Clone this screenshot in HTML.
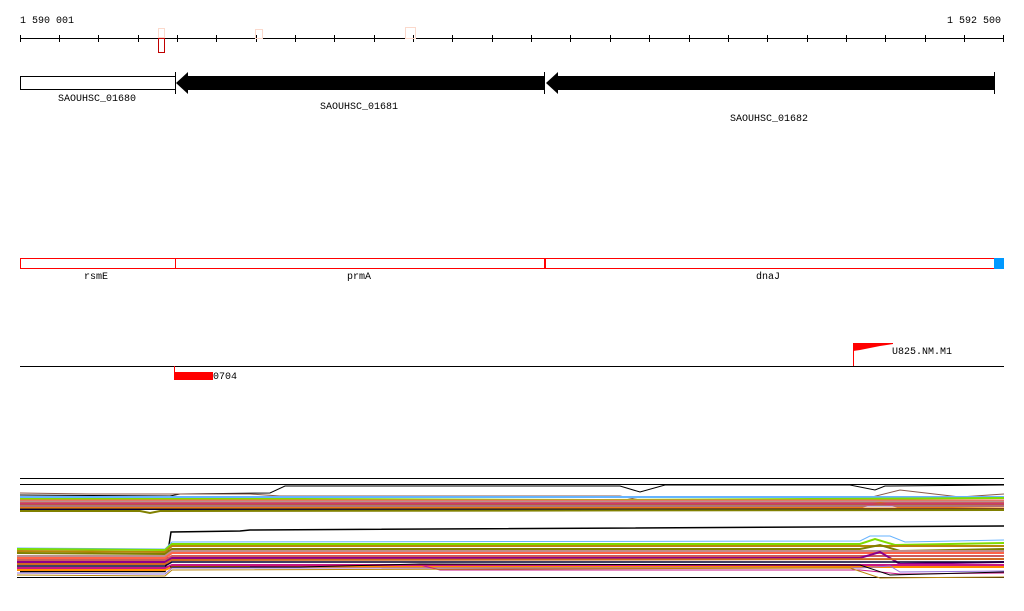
<!DOCTYPE html>
<html><head><meta charset="utf-8"><style>
html,body{margin:0;padding:0;background:#fff;width:1024px;height:611px;overflow:hidden}
svg{display:block}
text{font-family:"Liberation Mono","DejaVu Sans Mono",monospace;font-size:10px;fill:#000}
</style></head><body>
<svg width="1024" height="611" viewBox="0 0 1024 611" xmlns="http://www.w3.org/2000/svg">
<text x="20" y="23">1 590 001</text>
<text x="947" y="23">1 592 500</text>
<line x1="20" y1="38.5" x2="1004" y2="38.5" stroke="#000" stroke-width="1"/>
<g stroke="#000" stroke-width="1">
<line x1="20.5" y1="35" x2="20.5" y2="42"/><line x1="59.5" y1="35" x2="59.5" y2="42"/><line x1="98.5" y1="35" x2="98.5" y2="42"/><line x1="138.5" y1="35" x2="138.5" y2="42"/><line x1="177.5" y1="35" x2="177.5" y2="42"/><line x1="216.5" y1="35" x2="216.5" y2="42"/><line x1="256.5" y1="35" x2="256.5" y2="42"/><line x1="295.5" y1="35" x2="295.5" y2="42"/><line x1="334.5" y1="35" x2="334.5" y2="42"/><line x1="374.5" y1="35" x2="374.5" y2="42"/><line x1="413.5" y1="35" x2="413.5" y2="42"/><line x1="452.5" y1="35" x2="452.5" y2="42"/><line x1="492.5" y1="35" x2="492.5" y2="42"/><line x1="531.5" y1="35" x2="531.5" y2="42"/><line x1="570.5" y1="35" x2="570.5" y2="42"/><line x1="610.5" y1="35" x2="610.5" y2="42"/><line x1="649.5" y1="35" x2="649.5" y2="42"/><line x1="689.5" y1="35" x2="689.5" y2="42"/><line x1="728.5" y1="35" x2="728.5" y2="42"/><line x1="767.5" y1="35" x2="767.5" y2="42"/><line x1="807.5" y1="35" x2="807.5" y2="42"/><line x1="846.5" y1="35" x2="846.5" y2="42"/><line x1="885.5" y1="35" x2="885.5" y2="42"/><line x1="925.5" y1="35" x2="925.5" y2="42"/><line x1="964.5" y1="35" x2="964.5" y2="42"/><line x1="1003.5" y1="35" x2="1003.5" y2="42"/>
</g>
<rect x="158.5" y="28.5" width="6" height="9" fill="#fff" stroke="#fbd9cc"/>
<rect x="158.5" y="38.5" width="6" height="14" fill="#fff" stroke="#c00000"/>
<rect x="255.5" y="29.5" width="7" height="9" fill="none" stroke="#fbd9cc"/>
<rect x="405.5" y="27.5" width="10" height="11" fill="none" stroke="#fbd9cc"/>

<rect x="20.5" y="76.5" width="155" height="13" fill="#fff" stroke="#000"/>
<line x1="175.5" y1="72" x2="175.5" y2="94" stroke="#000"/>
<polygon points="176,83 188,72 188,76 544,76 544,90 188,90 188,94" fill="#000"/>
<line x1="544.5" y1="72" x2="544.5" y2="94" stroke="#000"/>
<polygon points="546,83 558,72 558,76 994,76 994,90 558,90 558,94" fill="#000"/>
<line x1="994.5" y1="72" x2="994.5" y2="94" stroke="#000"/>
<text x="58" y="101">SAOUHSC_01680</text>
<text x="320" y="109">SAOUHSC_01681</text>
<text x="730" y="121">SAOUHSC_01682</text>

<g fill="none" stroke="#f00" stroke-width="1">
<rect x="20.5" y="258.5" width="155" height="10"/>
<rect x="175.5" y="258.5" width="369" height="10"/>
<rect x="545.5" y="258.5" width="449" height="10"/>
</g>
<rect x="994" y="258" width="10" height="11" fill="#0099ff"/>
<text x="84" y="279">rsmE</text>
<text x="347" y="279">prmA</text>
<text x="756" y="279">dnaJ</text>

<line x1="20" y1="366.5" x2="1004" y2="366.5" stroke="#000"/>
<line x1="174.5" y1="366" x2="174.5" y2="373" stroke="#f00"/>
<rect x="174" y="372" width="39" height="8" fill="#f00"/>
<text x="213" y="379">0704</text>
<line x1="853.5" y1="343" x2="853.5" y2="366" stroke="#f00"/>
<polygon points="853,343 893,343 893,344 880,346 870,348 860,350 853,351" fill="#f00"/>
<text x="892" y="354">U825.NM.M1</text>

<g fill="none" stroke-width="1">
<line x1="20" y1="478.5" x2="1004" y2="478.5" stroke="#000"/>
<line x1="20" y1="484.5" x2="1004" y2="484.5" stroke="#000"/>
<polyline points="20,495 170,496 180,494 270,493 285,486 620,486 640,492 665,485 850,485 875,490 885,486 1004,485" stroke="#000"/>
<polyline points="20,493 90,494 250,494 280,496 620,496 640,500 860,500 900,490 960,497 1004,494" stroke="#8b5a4a"/>
</g>
<g fill="none" stroke-width="2">
<polyline points="20,497 1004,497" stroke="#66b3ff"/>
<polyline points="20,499 300,499 600,500 1004,498" stroke="#7fdc00"/>
<polyline points="20,501 1004,501" stroke="#bc8f8f"/>
<polyline points="20,503 1004,503" stroke="#cd5c5c"/>
<polyline points="20,505 1004,505" stroke="#b8860b"/>
<polyline points="20,507 860,507 880,503 900,507 1004,506" stroke="#d2691e"/>
<polyline points="20,509 1004,509" stroke="#000033"/>
<polyline points="20,511 140,511 150,513 160,511 1004,510" stroke="#808000"/>
<polyline points="20,500 1004,500" stroke="#ff6347" stroke-width="1"/>
<polyline points="20,504 1004,504" stroke="#c71585" stroke-width="1"/>
<polyline points="20,506 1004,506" stroke="#9370db" stroke-width="1"/>
<polyline points="20,508 1004,508" stroke="#ff8c00" stroke-width="1"/>
</g>
<g fill="none" stroke-width="1">
<polyline points="20,571.5 165,571.5 171,532 240,531 250,530 1004,526" stroke="#000" stroke-width="1.5"/>
<line x1="17" y1="577.5" x2="1004" y2="577.5" stroke="#000"/>
</g>
<g fill="none" stroke-width="2">
<polyline points="17,548 165,549 172,542 860,541 870,536 890,536 905,542 1004,540" stroke="#66b3ff" stroke-width="1"/>
<polyline points="17,549 165,550 172,544 860,544 875,539 895,545 1004,543" stroke="#7fdc00"/>
<polyline points="17,551 165,552 172,546 1004,546" stroke="#b8860b"/>
<polyline points="17,553 165,554 172,549 860,549 880,545 900,551 1004,549" stroke="#808000"/>
<polyline points="17,556 165,556 172,551 1004,551" stroke="#bc8f8f"/>
<polyline points="17,558 165,558 172,553 1004,553" stroke="#ff6347"/>
<polyline points="17,560 165,560 172,556 1004,556" stroke="#cd5c5c"/>
<polyline points="17,562 165,562 172,558 860,558 880,552 900,564 1004,562" stroke="#8b008b"/>
<polyline points="17,564 165,564 172,560 1004,559" stroke="#d2691e"/>
<polyline points="17,566 165,566 172,562 1004,562" stroke="#000033" stroke-width="1.5"/>
<polyline points="17,568 165,568 172,565 1004,565" stroke="#c71585"/>
<polyline points="17,570 165,570 172,567 1004,567" stroke="#ff8c00"/>
<polyline points="17,573 140,574 165,574 172,568 860,568 890,566 900,572 1004,571" stroke="#9370db" stroke-width="1"/>
<polyline points="250,566 420,565 440,570 860,570 900,574 1004,573" stroke="#c71585" stroke-width="1"/>
<polyline points="170,567 300,567 420,564 860,565 890,575 1004,572" stroke="#000" stroke-width="1"/>
<polyline points="17,575 165,576 172,570 850,568 880,578 1004,577" stroke="#b8860b" stroke-width="1"/>
</g>
</svg>
</body></html>
